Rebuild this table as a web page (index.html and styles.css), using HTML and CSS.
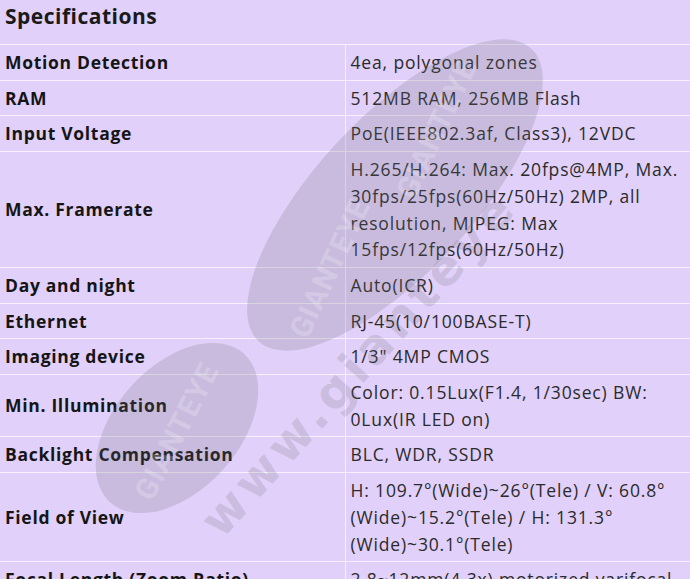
FILE: index.html
```html
<!DOCTYPE html>
<html lang="en">
  <head>
    <meta charset="UTF-8" />
    <meta name="viewport" content="width=device-width, initial-scale=1.0" />
    <title>Specifications</title>
    <link rel="stylesheet" href="styles.css">
  </head>
  <body>
    <div class="spec-container">
      <h2 class="spec-title">Specifications</h2>
      <table class="spec-table">
        <colgroup>
          <col class="col-label" />
          <col class="col-value" />
        </colgroup>
        <tr><th>Motion Detection</th><td>4ea, polygonal zones</td></tr>
        <tr><th>RAM</th><td>512MB RAM, 256MB Flash</td></tr>
        <tr><th>Input Voltage</th><td>PoE(IEEE802.3af, Class3), 12VDC</td></tr>
        <tr><th>Max. Framerate</th><td>H.265/H.264: Max. 20fps@4MP, Max. 30fps/25fps(60Hz/50Hz) 2MP, all resolution, MJPEG: Max 15fps/12fps(60Hz/50Hz)</td></tr>
        <tr><th>Day and night</th><td>Auto(ICR)</td></tr>
        <tr><th>Ethernet</th><td>RJ-45(10/100BASE-T)</td></tr>
        <tr><th>Imaging device</th><td>1/3" 4MP CMOS</td></tr>
        <tr><th>Min. Illumination</th><td>Color: 0.15Lux(F1.4, 1/30sec) BW: 0Lux(IR LED on)</td></tr>
        <tr><th>Backlight Compensation</th><td>BLC, WDR, SSDR</td></tr>
        <tr><th>Field of View</th><td>H: 109.7°(Wide)~26°(Tele) / V: 60.8°(Wide)~15.2°(Tele) / H: 131.3°(Wide)~30.1°(Tele)</td></tr>
        <tr><th>Focal Length (Zoom Ratio)</th><td>2.8~12mm(4.3x) motorized varifocal</td></tr>
      </table>

      <!-- watermark over the table -->
      <svg class="watermark" width="690" height="579" viewBox="0 0 690 579">
        <g transform="rotate(-47 395 195)">
          <ellipse cx="395" cy="195" rx="200" ry="78" class="wm-blob" />
          <text x="300" y="207" class="wm-logo" transform="rotate(-18 300 207)">GIANTEYE</text>
          <text x="475" y="190" class="wm-logo" transform="rotate(-18 475 190)">GIANTEYE</text>
        </g>
        <g transform="rotate(-48 177 428)">
          <ellipse cx="177" cy="428" rx="100" ry="62" class="wm-blob" />
          <text x="177" y="440" class="wm-logo" transform="rotate(-15 177 440)">GIANTEYE</text>
        </g>
        <text x="222" y="540" class="wm-url" transform="rotate(-48 222 540)">www.gianteye</text>
      </svg>
    </div>
  </body>
</html>
```

FILE: styles.css
```css
body {
  font-family: "Open Sans", "Noto Sans", sans-serif;
  background-color: #e1d0f9;
  margin: 0;
  padding: 0;
  color: #1e1e1e;
}
.spec-container {
  position: relative;
  width: 690px;
  overflow: hidden;
}
.spec-title {
  margin: 0;
  height: 44px;
  padding: 2px 5px 0;
  box-sizing: border-box;
  font-size: 21px;
  font-weight: 700;
  letter-spacing: 0.5px;
  line-height: 28px;
  color: #1a1a1a;
}
.spec-table {
  width: 100%;
  border-collapse: collapse;
  table-layout: fixed;
}
.col-label {
  width: 345px;
}
.spec-table th,
.spec-table td {
  border-top: 1px solid #f6f1fd;
  padding: 4px 5px;
  line-height: 26.7px;
  font-size: 17.5px;
  vertical-align: middle;
  text-align: left;
}
.spec-table th {
  font-weight: 700;
  letter-spacing: 0.7px;
  color: #151515;
}
.spec-table td {
  border-left: 1px solid #f6f1fd;
  font-weight: 400;
  letter-spacing: 0.85px;
  color: #2b2b2b;
}
.watermark {
  position: absolute;
  left: 0;
  top: 0;
  pointer-events: none;
}
.wm-blob {
  fill: rgba(110, 110, 120, 0.21);
}
.wm-logo {
  fill: rgba(255, 255, 255, 0.22);
  font-family: "Liberation Sans Narrow", "Roboto", sans-serif;
  font-weight: 700;
  font-size: 30px;
  text-anchor: middle;
  letter-spacing: 1px;
}
.wm-url {
  fill: rgba(110, 110, 120, 0.21);
  font-family: "DejaVu Sans", sans-serif;
  font-weight: 700;
  font-size: 48px;
  letter-spacing: 5px;
}
```
